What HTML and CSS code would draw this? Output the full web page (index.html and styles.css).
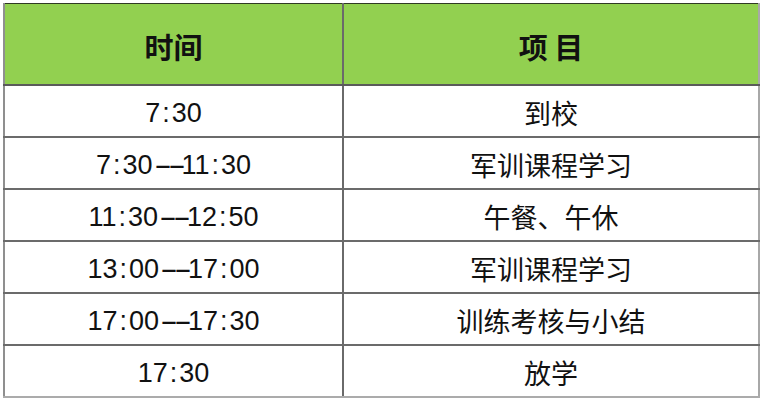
FILE: index.html
```html
<!DOCTYPE html>
<html lang="zh-CN">
<head>
<meta charset="utf-8">
<title>作息时间表</title>
<link rel="stylesheet" href="styles.css">
</head>
<body>
<table class="schedule">
  <thead>
    <tr>
      <th class="col-time">时间</th>
      <th class="col-item">项 目</th>
    </tr>
  </thead>
  <tbody>
    <tr><td class="time">7<span class="c">:</span>30</td><td class="item">到校</td></tr>
    <tr><td class="time">7<span class="c">:</span>30<span class="d">--</span>11<span class="c">:</span>30</td><td class="item">军训课程学习</td></tr>
    <tr><td class="time">11<span class="c">:</span>30<span class="d">--</span>12<span class="c">:</span>50</td><td class="item">午餐、午休</td></tr>
    <tr><td class="time">13<span class="c">:</span>00<span class="d">--</span>17<span class="c">:</span>00</td><td class="item">军训课程学习</td></tr>
    <tr><td class="time">17<span class="c">:</span>00<span class="d">--</span>17<span class="c">:</span>30</td><td class="item">训练考核与小结</td></tr>
    <tr><td class="time">17<span class="c">:</span>30</td><td class="item">放学</td></tr>
  </tbody>
</table>
</body>
</html>
```

FILE: styles.css
```css
html, body {
  margin: 0;
  padding: 0;
  background: #ffffff;
}

body {
  padding: 3px 0 0 3px;
  font-family: "Noto Sans CJK SC", "Liberation Sans", sans-serif;
  color: #111;
}

.schedule {
  border-collapse: collapse;
  width: 757px;
  table-layout: fixed;
}

.schedule th,
.schedule td {
  padding: 0;
  text-align: center;
  vertical-align: middle;
  line-height: 30px;
}

.schedule thead tr {
  height: 81px;
}

.schedule thead th {
  background: #92d050;
  font-size: 29px;
  font-weight: 700;
  color: #111;
  border-top: 1px solid #2f3a22;
  border-bottom: 2px solid #5a5a5a;
  padding-top: 4px;
}

.col-time {
  width: 337px;
  border-left: 2px solid #8f8f8f;
  border-right: 2px solid #6a6a6a;
}

.col-item {
  border-right: 2px solid #a8a8a8;
}

.schedule tbody tr {
  height: 52px;
}

.schedule tbody td {
  border-bottom: 2px solid #6b6b6b;
  padding-top: 4px;
}

.schedule tbody tr:last-child td {
  border-bottom: 2px solid #ababab;
}

.time {
  font-family: "Liberation Sans", "Noto Sans CJK SC", sans-serif;
  font-size: 27px;
  border-left: 2px solid #8f8f8f;
  border-right: 2px solid #6a6a6a;
}

.time .c {
  padding: 0 2px;
}

.time .d {
  display: inline-block;
  letter-spacing: -2px;
  transform: scaleX(2);
  margin: 0 7px 0 8px;
}

.item {
  font-size: 27px;
  border-right: 2px solid #a8a8a8;
}
```
